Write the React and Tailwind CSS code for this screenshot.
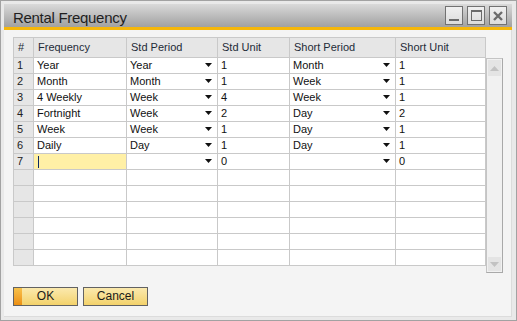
import React from 'react';

const rows = [
  ['Year', 'Year', '1', 'Month', '1'],
  ['Month', 'Month', '1', 'Week', '1'],
  ['4 Weekly', 'Week', '4', 'Week', '1'],
  ['Fortnight', 'Week', '2', 'Day', '2'],
  ['Week', 'Week', '1', 'Day', '1'],
  ['Daily', 'Day', '1', 'Day', '1'],
];

const headers = ['#', 'Frequency', 'Std Period', 'Std Unit', 'Short Period', 'Short Unit'];

// Pfeil der Auswahlliste
const Arrow = () => (
  <svg width="7" height="4" viewBox="0 0 7 4" className="ml-auto mr-[5px] mb-[2px] shrink-0">
    <polygon points="0,0 7,0 3.5,4" fill="#111" />
  </svg>
);

const Cell = ({ children, className = '' }) => (
  <div className={`h-[16px] border-r border-b border-[#c9c9c9] flex items-center pl-[3px] text-[#111] ${className}`}>
    {children}
  </div>
);

function App() {
  return (
    <div className="w-[517px] h-[321px] bg-[#e9e9e9] border border-[#a2a2a2] pt-[3px] pl-[3px] pr-[4px] pb-[3px] flex flex-col font-['Liberation_Sans',Arial,sans-serif] text-[11px] leading-[13px]">
      {/* Titelleiste */}
      <div className="h-[23px] shrink-0 bg-gradient-to-b from-[#dadada] to-[#a1a1a1] flex items-center pl-[9px] pr-[5px]">
        <span className="text-[15px] leading-[17px] pt-[4px] text-[#1f1f1f] tracking-[-0.3px]">Rental Frequency</span>
        <div className="ml-auto flex gap-[4px]">
          <WinButton>
            <div className="w-[10px] h-[2px] bg-[#6b6b6b] mt-[9px]" />
          </WinButton>
          <WinButton>
            <div className="w-[11px] h-[11px] border border-[#6b6b6b] border-t-[2px]" />
          </WinButton>
          <WinButton>
            <svg width="10" height="10" viewBox="0 0 10 10">
              <path d="M1 1 L9 9 M9 1 L1 9" stroke="#6b6b6b" strokeWidth="2.4" />
            </svg>
          </WinButton>
        </div>
      </div>
      <div className="h-[3px] shrink-0 bg-[#f5b70a]" />

      {/* Inhalt */}
      <div className="flex-1 bg-[#f4f4f4] border-r border-b border-[#dcdcdc] pl-[9px] pt-[7px]">
        <div className="flex items-start">
          <div className="w-[473px] border-l border-t border-[#c9c9c9] grid grid-cols-[20px_93px_91px_72px_106px_90px]">
            {headers.map((h) => (
              <div key={h} className="h-[20px] bg-[#e6e6e6] border-r border-b border-[#c9c9c9] pl-[4px] pt-[3px] text-[#1e2b38]">
                {h}
              </div>
            ))}
            {rows.map((r, i) => (
              <React.Fragment key={i}>
                <Cell className="bg-[#e6e6e6] text-[#222]">{i + 1}</Cell>
                <Cell className="bg-white">{r[0]}</Cell>
                <Cell className="bg-white">{r[1]}<Arrow /></Cell>
                <Cell className="bg-white">{r[2]}</Cell>
                <Cell className="bg-white">{r[3]}<Arrow /></Cell>
                <Cell className="bg-white">{r[4]}</Cell>
              </React.Fragment>
            ))}
            {/* neue Zeile */}
            <Cell className="bg-[#e6e6e6] text-[#222]">7</Cell>
            <Cell className="bg-[#fff0a6]">
              <div className="w-px h-[12px] bg-[#0b2a66] ml-[1px]" />
            </Cell>
            <Cell className="bg-white"><Arrow /></Cell>
            <Cell className="bg-white">0</Cell>
            <Cell className="bg-white"><Arrow /></Cell>
            <Cell className="bg-white">0</Cell>
            {[0, 1, 2, 3, 4, 5].map((i) => (
              <React.Fragment key={'e' + i}>
                <Cell className="bg-[#e6e6e6]" />
                <Cell className="bg-white" />
                <Cell className="bg-white" />
                <Cell className="bg-white" />
                <Cell className="bg-white" />
                <Cell className="bg-white" />
              </React.Fragment>
            ))}
          </div>
          {/* Bildlaufleiste */}
          <div className="mt-[21px] w-[17px] h-[215px] bg-[#f1f1f1] border border-[#c4c4c4] border-r-[#a9a9a9] border-b-[#a9a9a9] flex flex-col justify-between p-[1px]">
            <div className="h-[16px] bg-[#e4e4e4] flex items-center justify-center">
              <svg width="9" height="5" viewBox="0 0 9 5"><polygon points="0,5 9,5 4.5,0" fill="#c2c2c2" /></svg>
            </div>
            <div className="h-[14px] bg-[#e4e4e4] flex items-center justify-center">
              <svg width="9" height="5" viewBox="0 0 9 5"><polygon points="0,0 9,0 4.5,5" fill="#c2c2c2" /></svg>
            </div>
          </div>
        </div>

        {/* Schaltflächen */}
        <div className="flex gap-[5px] mt-[14px]">
          <button className="relative w-[65px] h-[19px] border border-[#626262] bg-gradient-to-b from-[#fbe9ad] to-[#f3d26a] flex items-center justify-center text-[12px] text-[#1a1a1a] overflow-hidden">
            <div className="absolute left-0 top-0 bottom-0 w-[8px] bg-gradient-to-b from-[#f7c24a] to-[#ec8f10]" />
            <span className="relative">OK</span>
          </button>
          <button className="w-[65px] h-[19px] border border-[#626262] bg-gradient-to-b from-[#fbe9ad] to-[#f3d26a] flex items-center justify-center text-[12px] text-[#1a1a1a]">
            Cancel
          </button>
        </div>
      </div>
    </div>
  );
}

const WinButton = ({ children }) => (
  <div className="w-[18px] h-[19px] border border-[#727272] bg-gradient-to-b from-[#f0f0f0] to-[#dcdcdc] flex items-center justify-center">
    {children}
  </div>
);

export default App;
